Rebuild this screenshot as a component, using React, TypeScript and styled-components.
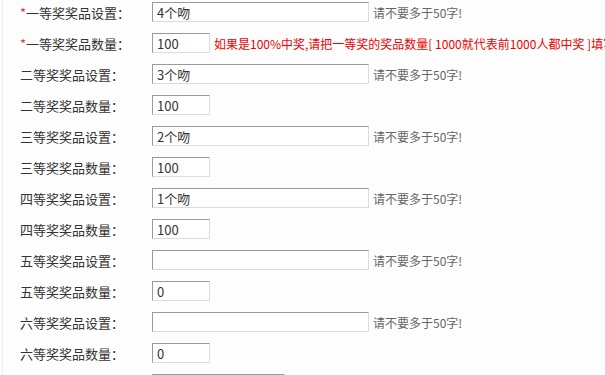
import React from 'react';
import styled, { createGlobalStyle } from 'styled-components';

const GlobalStyle = createGlobalStyle`
  html, body {
    margin: 0;
    padding: 0;
    background: #fdfdfd;
    overflow: hidden;
  }
  body {
    font-family: "Noto Sans CJK SC", "Liberation Sans", sans-serif;
    color: #333;
  }
`

const Panel = styled.div`
  margin-left: 2px;
  border-left: 1px solid #ececec;
  min-height: 375px;
  padding-top: 2px;
  display: flex;
  flex-direction: column;
  gap: 11px;
`

const Row = styled.div`
  display: flex;
  align-items: center;
  height: 20px;
  padding-left: 17px;
  white-space: nowrap;
`

const Label = styled.label`
  width: 132px;
  flex-shrink: 0;
  font-size: 13px;
  color: #333;
  > em {
    font-style: normal;
    color: #e4393c;
  }
`

const Field = styled.input<{ $size: 'short' | 'long' | 'mid' }>`
  box-sizing: border-box;
  flex-shrink: 0;
  width: ${p => (p.$size === 'long' ? '217px' : p.$size === 'mid' ? '133px' : '58px')};
  height: 20px;
  margin: 0;
  padding: 0 4px;
  border: 1px solid;
  border-color: #9a9a9a #dcdcdc #dcdcdc #9a9a9a;
  background: #fff;
  font-family: "Noto Sans CJK SC", "Liberation Sans", sans-serif;
  font-size: 13px;
  color: #333;
  outline: none;
`

const Hint = styled.span<{ $warn?: boolean }>`
  margin-left: 4px;
  font-size: 12px;
  color: ${p => (p.$warn ? '#e00' : '#666')};
`

type Item = { level: string; name: string; count: string; required?: boolean };

const items: Item[] = [
  { level: '一', name: '4个吻', count: '100', required: true },
  { level: '二', name: '3个吻', count: '100' },
  { level: '三', name: '2个吻', count: '100' },
  { level: '四', name: '1个吻', count: '100' },
  { level: '五', name: '', count: '0' },
  { level: '六', name: '', count: '0' },
];

function App() {
  return (
    <>
      <GlobalStyle />
      <Panel>
        {items.map(it => (
          <React.Fragment key={it.level}>
            <Row>
              <Label>{it.required && <em>*</em>}{it.level}等奖奖品设置：</Label>
              <Field $size="long" defaultValue={it.name} />
              <Hint>请不要多于50字!</Hint>
            </Row>
            <Row>
              <Label>{it.required && <em>*</em>}{it.level}等奖奖品数量：</Label>
              <Field $size="short" defaultValue={it.count} />
              {it.required && (
                <Hint $warn>如果是100%中奖,请把一等奖的奖品数量[ 1000就代表前1000人都中奖 ]填写为与活动参与人数相同</Hint>
              )}
            </Row>
          </React.Fragment>
        ))}
        <Row>
          <Label />
          <Field $size="mid" />
        </Row>
      </Panel>
    </>
  );
}

export default App
